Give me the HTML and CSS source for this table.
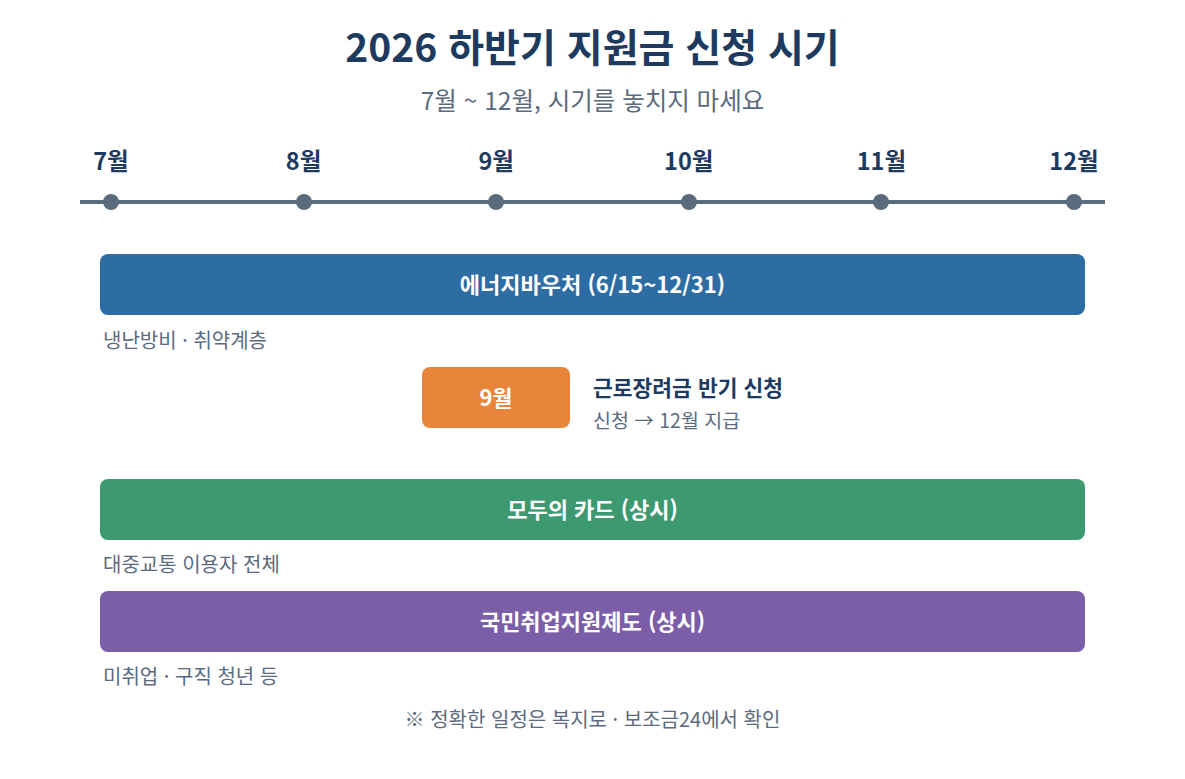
FILE: index.html
```html
<!DOCTYPE html>
<html lang="ko">
<head>
<meta charset="utf-8">
<title>2026 하반기 지원금 신청 시기</title>
<link rel="stylesheet" href="styles.css">
</head>
<body>
<main class="page">
  <h1 class="title">2026 하반기 지원금 신청 시기</h1>
  <p class="subtitle">7월 ~ 12월, 시기를 놓치지 마세요</p>

  <section class="timeline">
    <div class="month"><span class="month-label">7월</span><span class="dot"></span></div>
    <div class="month"><span class="month-label">8월</span><span class="dot"></span></div>
    <div class="month"><span class="month-label">9월</span><span class="dot"></span></div>
    <div class="month"><span class="month-label">10월</span><span class="dot"></span></div>
    <div class="month"><span class="month-label">11월</span><span class="dot"></span></div>
    <div class="month"><span class="month-label">12월</span><span class="dot"></span></div>
  </section>

  <section class="programs">
    <div class="bar bar-blue">에너지바우처 (6/15~12/31)</div>
    <p class="caption">냉난방비 · 취약계층</p>

    <div class="event">
      <div class="event-badge">9월</div>
      <div class="event-text">
        <div class="event-title">근로장려금 반기 신청</div>
        <div class="event-sub">신청 → 12월 지급</div>
      </div>
    </div>

    <div class="bar bar-green">모두의 카드 (상시)</div>
    <p class="caption caption-tight">대중교통 이용자 전체</p>

    <div class="bar bar-purple">국민취업지원제도 (상시)</div>
    <p class="caption caption-tight">미취업 · 구직 청년 등</p>
  </section>

  <p class="footnote">※ 정확한 일정은 복지로 · 보조금24에서 확인</p>
</main>
</body>
</html>
```

FILE: styles.css
```css
* { box-sizing: border-box; }

html, body {
  margin: 0;
  padding: 0;
  background: #ffffff;
}

body {
  font-family: "Noto Sans CJK KR", "Noto Sans", sans-serif;
  width: 1185px;
  height: 779px;
  overflow: hidden;
}

.page {
  display: flex;
  flex-direction: column;
  padding-top: 21px;
}

.title {
  margin: 0;
  text-align: center;
  font-size: 39px;
  line-height: 48px;
  font-weight: 700;
  color: #1e3a5f;
}

.subtitle {
  margin: 15px 0 0;
  text-align: center;
  font-size: 24.5px;
  line-height: 32px;
  font-weight: 400;
  color: #5b6b7f;
}

.timeline {
  position: relative;
  margin-top: 30px;
  margin-left: 14.7px;
  display: grid;
  grid-template-columns: repeat(6, 192.6px);
}

.timeline::before {
  content: "";
  position: absolute;
  left: 65.3px;
  width: 1025px;
  top: 54px;
  height: 4px;
  background: #5a6b7d;
}

.month {
  display: flex;
  flex-direction: column;
  align-items: center;
}

.month-label {
  font-size: 23.5px;
  line-height: 28px;
  font-weight: 700;
  color: #1e3a5f;
}

.dot {
  position: relative;
  margin-top: 20px;
  width: 16px;
  height: 16px;
  border-radius: 50%;
  background: #5a6b7d;
}

.programs {
  display: flex;
  flex-direction: column;
  padding-left: 100px;
  margin-top: 44px;
}

.bar {
  width: 985px;
  height: 61px;
  padding-bottom: 3px;
  border-radius: 8px;
  display: flex;
  align-items: center;
  justify-content: center;
  color: #ffffff;
  font-size: 22px;
  font-weight: 700;
}

.bar-blue { background: #2e6da4; }
.bar-green { background: #3d9970; margin-top: 51px; }
.bar-purple { background: #7b5ea7; margin-top: 15px; }

.caption {
  margin: 13px 0 0 3px;
  font-size: 20px;
  line-height: 24px;
  color: #5b6b7f;
}

.caption-tight { margin-top: 12px; }

.event {
  display: flex;
  align-items: flex-start;
  gap: 23px;
  height: 61px;
  margin-top: 15px;
  margin-left: 322px;
}

.event-badge {
  width: 148px;
  height: 61px;
  padding-bottom: 3px;
  border-radius: 8px;
  background: #e8853a;
  color: #ffffff;
  font-size: 22px;
  font-weight: 700;
  display: flex;
  align-items: center;
  justify-content: center;
}

.event-text {
  display: flex;
  flex-direction: column;
  gap: 8px;
  padding-top: 7px;
}

.event-title {
  font-size: 21.5px;
  line-height: 26px;
  font-weight: 700;
  color: #1e3a5f;
}

.event-sub {
  font-size: 19.5px;
  line-height: 24px;
  color: #5b6b7f;
}

.footnote {
  margin: 19px 0 0;
  text-align: center;
  font-size: 20px;
  line-height: 24px;
  color: #5b6b7f;
}
```
